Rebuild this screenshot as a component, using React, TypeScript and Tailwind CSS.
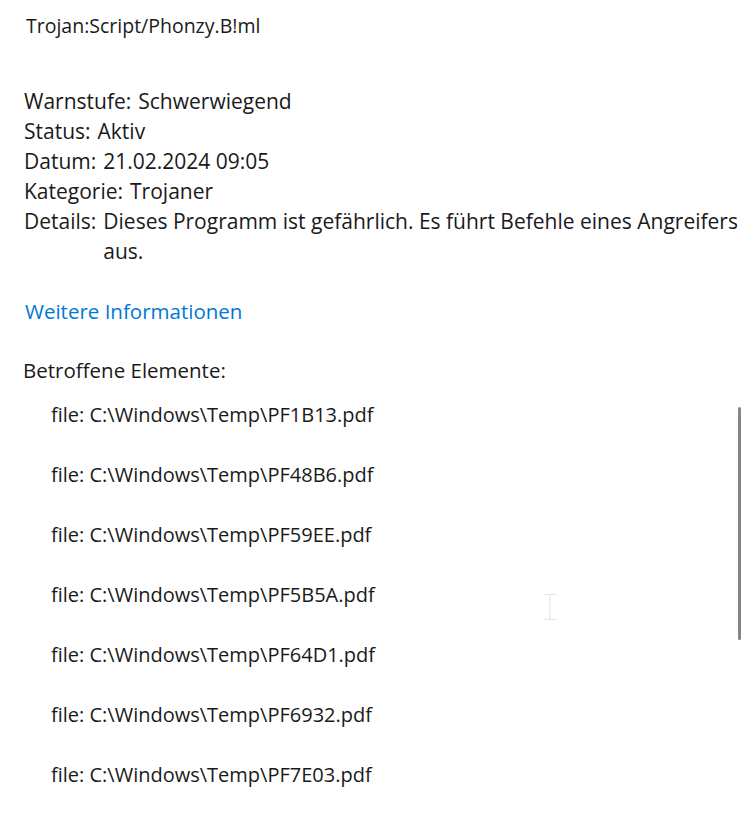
import React from 'react'

const details = [
  { label: 'Warnstufe:', value: 'Schwerwiegend' },
  { label: 'Status:', value: 'Aktiv' },
  { label: 'Datum:', value: '21.02.2024 09:05' },
  { label: 'Kategorie:', value: 'Trojaner' },
]

const files = ['PF1B13', 'PF48B6', 'PF59EE', 'PF5B5A', 'PF64D1', 'PF6932', 'PF7E03']

export default function App() {
  return (
    <div
      className="relative h-[816px] w-[756px] overflow-hidden bg-white text-[#1a1a1a]"
      style={{ fontFamily: '"Segoe UI", "Open Sans", "Noto Sans", sans-serif' }}
    >
      <div className="mt-[14px] pl-[26px] text-[19.5px] leading-[24px]">Trojan:Script/Phonzy.B!ml</div>

      <div className="mt-[48px] pl-[24px] text-[21px] leading-[30px]">
        {details.map((d) => (
          <div key={d.label} className="flex gap-[7px]">
            <span>{d.label}</span>
            <span>{d.value}</span>
          </div>
        ))}
        <div className="flex gap-[7px]">
          <span>Details:</span>
          <div>
            <div className="whitespace-nowrap">Dieses Programm ist gefährlich. Es führt Befehle eines Angreifers</div>
            <div>aus.</div>
          </div>
        </div>
      </div>

      <div className="mt-[30px] pl-[25px] text-[20.5px] leading-[30px] text-[#0078d4]">Weitere Informationen</div>

      <div className="mt-[29px] pl-[23px] text-[20.5px] leading-[30px]">Betroffene Elemente:</div>

      <div className="mt-[15px] flex flex-col gap-[30px] pl-[51px] text-[20px] leading-[30px]">
        {files.map((f) => (
          <div key={f}>file: C:\Windows\Temp\{f}.pdf</div>
        ))}
      </div>

      <div className="absolute left-[738px] top-[407px] h-[233px] w-[3px] rounded-full bg-[#858585]" />

      <svg className="absolute left-[542px] top-[593px]" width="16" height="28" viewBox="0 0 16 28" fill="none">
        <path d="M1 1.5h14M1 26.5h14M8 1.5v25" stroke="#e6e6e6" strokeWidth="1.2" />
      </svg>
    </div>
  )
}
